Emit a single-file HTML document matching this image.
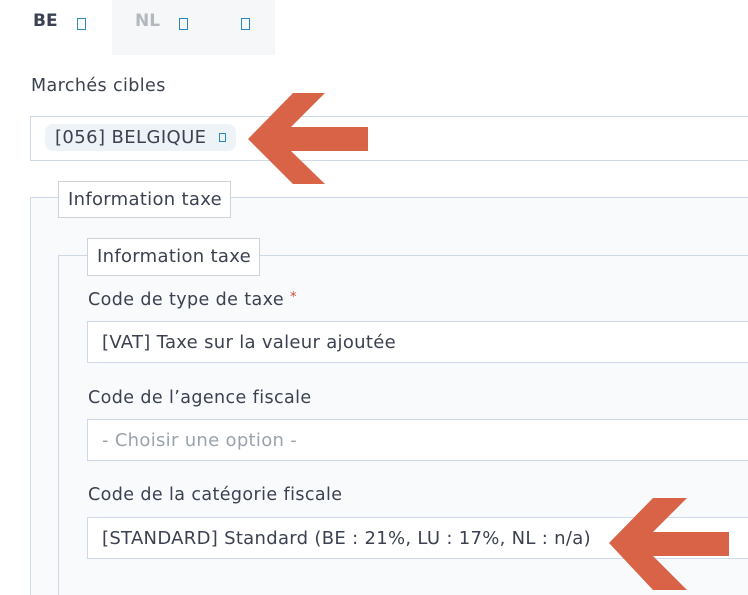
<!DOCTYPE html>
<html style="overflow:hidden;height:595px"><head><meta charset="utf-8"><style>
body{margin:0;width:748px;height:595px;overflow:hidden;background:#fff;font-family:"DejaVu Sans","Liberation Sans",sans-serif;color:#3b4150;position:relative}
.a{position:absolute}
.ic{position:absolute;width:7px;height:10px;border:1px solid #2a88c0}
.lbl{position:absolute;font-size:17.5px;letter-spacing:0.4px;color:#3b4150;white-space:nowrap}
.inp{position:absolute;left:87px;width:661px;height:42px;border:1px solid #cdd9e6;border-right:none;background:#fff;font-size:18px;letter-spacing:0.3px;line-height:42px;padding-left:14px;box-sizing:border-box;white-space:nowrap;overflow:hidden}
.leg{position:absolute;border:1px solid #cfd3d8;background:#fff;font-size:18px;letter-spacing:0.3px;line-height:35px;padding:0 9px;box-sizing:border-box;white-space:nowrap;overflow:hidden}
</style></head><body>
<div class="a" style="left:112px;top:0;width:163px;height:55px;background:#f5f7f9"></div>
<div class="a" style="left:33px;top:11px;font-weight:bold;font-size:17px;color:#3b4150">BE</div>
<div class="ic" style="left:77px;top:18px"></div>
<div class="a" style="left:135px;top:11px;font-weight:bold;font-size:17px;color:#b3b8bf">NL</div>
<div class="ic" style="left:179px;top:18px"></div>
<div class="ic" style="left:241px;top:18px"></div>
<div class="lbl" style="left:31px;top:76px">Marchés cibles</div>
<div class="a" style="left:30px;top:116px;width:718px;height:45px;border:1px solid #cdd9e6;border-right:none;box-sizing:border-box"></div>
<div class="a" style="left:45px;top:124px;width:191px;height:27px;background:#eef3f8;border-radius:8px;font-size:18px;letter-spacing:0.4px;line-height:27px;padding-left:10px;box-sizing:border-box;white-space:nowrap">[056] BELGIQUE</div>
<div class="a" style="left:219px;top:133px;width:5px;height:7px;border:1px solid #2a88c0"></div>
<div class="a" style="left:30px;top:197px;width:718px;height:398px;border:1px solid #cdd9e6;border-right:none;border-bottom:none;background:#f8fafc;box-sizing:border-box"></div>
<div class="leg" style="left:58px;top:181px;width:173px;height:37px">Information taxe</div>
<div class="a" style="left:58px;top:255px;width:690px;height:340px;border:1px solid #cdd9e6;border-right:none;border-bottom:none;background:#f8fafc;box-sizing:border-box"></div>
<div class="leg" style="left:87px;top:238px;width:173px;height:38px">Information taxe</div>
<div class="lbl" style="left:88px;top:290px">Code de type de taxe <span style="color:#d0493a;font-size:13px;vertical-align:top">*</span></div>
<div class="inp" style="top:321px">[VAT] Taxe sur la valeur ajoutée</div>
<div class="lbl" style="left:88px;top:388px">Code de l’agence fiscale</div>
<div class="inp" style="top:419px;color:#9aa3ad">- Choisir une option -</div>
<div class="lbl" style="left:88px;top:485px">Code de la catégorie fiscale</div>
<div class="inp" style="top:517px">[STANDARD] Standard (BE : 21%, LU : 17%, NL : n/a)</div>
<svg class="a" style="left:0;top:0" width="748" height="595"><g fill="#d96346">
<polygon points="248,139 293,93 325,93 291,127 368,127 368,151 291,151 325,184 293,184"/>
<polygon points="609,543 653,498 687,498 653,532 729,532 729,556 653,556 687,590 653,590"/>
</g></svg>
</body></html>
